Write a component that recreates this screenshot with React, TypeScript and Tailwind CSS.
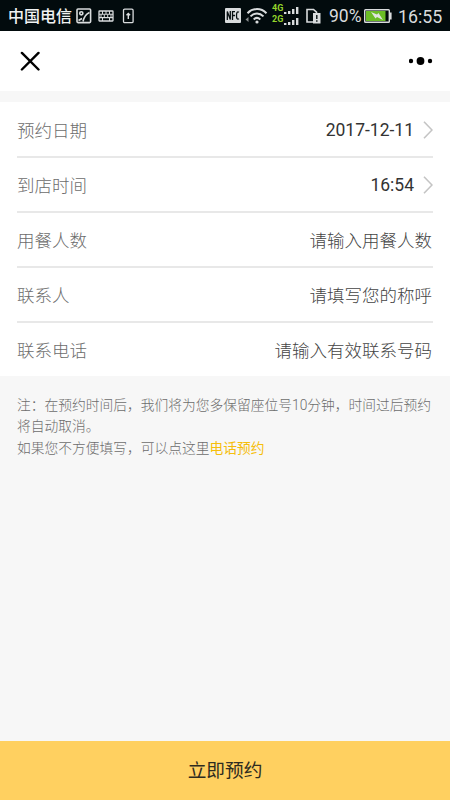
import React from "react";

const fields = [
  { label: "预约日期", value: "2017-12-11", picker: true },
  { label: "到店时间", value: "16:54", picker: true },
  { label: "用餐人数", placeholder: "请输入用餐人数" },
  { label: "联系人", placeholder: "请填写您的称呼" },
  { label: "联系电话", placeholder: "请输入有效联系号码" },
];

function StatusBar() {
  return (
    <div className="flex h-[31px] shrink-0 items-center bg-[#020b0d] pl-2 pr-2 text-[#d9dcdd]">
      <span className="w-[64px] whitespace-nowrap pt-[2px] text-[16px] leading-none font-medium text-[#f0f2f2]">
        中国电信
      </span>
      <svg className="ml-[4px] h-4 w-4" viewBox="0 0 16 16" fill="none" stroke="currentColor" strokeWidth="1.6">
        <rect x="1" y="1" width="13.6" height="13.6" rx="1" />
        <circle cx="5.3" cy="5.3" r="1.6" />
        <path d="M2.5 12.5 6 10.500M7 13.500C8 9 10 6 13.500 4.500" />
      </svg>
      <svg className="ml-[6px] h-3 w-4" viewBox="0 0 16 12" fill="none" stroke="currentColor">
        <rect x="1" y="1" width="14" height="10" rx="0.5" strokeWidth="1.3" />
        <path d="M1 4.200h14M1 7.600h14" strokeWidth="1.1" />
        <path d="M4.500 1v3M8 1v3M11.500 1v3M3 4.500v3M6.300 4.500v3M9.700 4.500v3M13 4.500v3M4.500 8v3M11.500 8v3" strokeWidth="1" />
      </svg>
      <svg className="ml-[8px] h-4 w-3" viewBox="0 0 12 16" fill="none" stroke="currentColor">
        <rect x="1.5" y="1.2" width="9.6" height="13.5" rx="1.2" strokeWidth="1.3" />
        <path d="M6.300 5v6M4.500 7.200l1.800-1.800 1.800 1.800" strokeWidth="1.4" />
      </svg>
      <div className="flex-1" />
      <svg className="h-[15px] w-[16px]" viewBox="0 0 16 15">
        <rect width="16" height="15" rx="1" fill="currentColor" />
        <path
          d="M2.300 12V3.500L5.300 11.500V3M7.500 12V3.600H10M7.500 7.500H10M14 4.200c-1.700-1-2.500.3-2.500 3.300s.8 4.300 2.500 3.300"
          fill="none"
          stroke="#071012"
          strokeWidth="1.3"
        />
      </svg>
      <svg className="ml-[4px] h-[16px] w-[23px]" viewBox="0 0 23 16" fill="none" stroke="currentColor" strokeWidth="2">
        <path d="M2.500 5.200C8-.3 16-.3 21.500 5.200M5.500 8.400c4-4 9-4 13 0M8.700 11.400c2.200-2 4.400-2 6.600 0" />
        <circle cx="12" cy="14" r="1.6" fill="currentColor" stroke="none" />
        <path d="M3.500 9v5L.5 11.500z" fill="#8b9091" stroke="none" />
      </svg>
      <div className="ml-[4px] -mt-1 flex w-[12px] flex-col font-[Roboto] text-[9px] leading-[11px] font-bold text-[#94d32b]">
        <span>4G</span>
        <span>2G</span>
      </div>
      <svg className="h-[21px] w-[15px]" viewBox="0 0 15 21" fill="currentColor">
        <path d="M0 7h2.400v2H0zM4 6h2.400v3H4zM8 4h2.400v5H8zM12 2h2.400v7H12z" />
        <path d="M0 18h2.400v2H0zM4 17h2.400v3H4zM8 15h2.400v5H8zM12 13h2.400v7H12z" />
      </svg>
      <svg className="ml-[7px] h-[16px] w-[15px]" viewBox="0 0 15 16">
        <path d="M1 1.500h6.500l3 2.700V14H1z" fill="none" stroke="currentColor" strokeWidth="1.6" />
        <path d="M7 5h7.500v10.500H7z" fill="currentColor" />
        <path d="M10.800 7v4M10.800 12.300v1.500" stroke="#071012" strokeWidth="1.4" />
      </svg>
      <span className="ml-[8px] w-[34px] whitespace-nowrap pt-[2px] font-[Roboto] text-[17.5px] leading-none">
        90%
      </span>
      <svg className="ml-[1px] h-[14px] w-[28px]" viewBox="0 0 28 14">
        <rect x=".7" y=".7" width="24.6" height="12.6" rx=".8" fill="none" stroke="currentColor" strokeWidth="1.4" />
        <path d="M26 3.500h1.600v7H26z" fill="currentColor" />
        <path d="M2 2h19.500v10H2z" fill="#6bbd25" />
        <path d="m7 3 6 2.500L14.500 4 19 11l-6-3-1.500 1.500z" fill="#e0e5dd" />
      </svg>
      <span className="ml-[6px] w-[44px] whitespace-nowrap pt-[2px] font-[Roboto] text-[17.8px] leading-none">
        16:55
      </span>
    </div>
  );
}

function App() {
  return (
    <div className="flex h-[800px] w-[450px] flex-col overflow-hidden bg-[#f7f7f7] font-['Roboto','Noto_Sans_CJK_SC',sans-serif]">
      <StatusBar />
      <header className="flex h-[60px] shrink-0 items-center justify-between bg-white pr-[17px] pl-5">
        <svg className="h-5 w-5" viewBox="0 0 20 20" stroke="#000" strokeWidth="2.4" strokeLinecap="round">
          <path d="M1.900 1.900l16.600 16.600M18.500 1.900 1.900 18.500" />
        </svg>
        <svg className="h-2 w-6" viewBox="0 0 24 8">
          <circle cx="2" cy="4" r="2.2" />
          <circle cx="11.5" cy="4" r="3.9" />
          <circle cx="21" cy="4" r="2.2" />
        </svg>
      </header>

      <div className="mt-[11px] flex flex-col bg-white px-[17px] pt-px">
        {fields.map((field) => (
          <div
            key={field.label}
            className="flex h-[55px] items-center justify-between border-b-2 border-[#e8e8e8] text-[17.5px] last:h-[53px] last:border-b-0"
          >
            <span className="pt-[3px] font-light text-[#6c6c6c]">{field.label}</span>
            {field.picker ? (
              <div className="flex items-center">
                <span className="pt-[2px] text-[#333]">{field.value}</span>
                <svg
                  className="ml-[9px] h-[18px] w-[10px]"
                  viewBox="0 0 10 18"
                  fill="none"
                  stroke="#c4c4c4"
                  strokeWidth="1.6"
                >
                  <path d="M1 .8 9 9l-8 8.200" />
                </svg>
              </div>
            ) : (
              <span className="pt-[3px] pr-px font-light text-[#444]">{field.placeholder}</span>
            )}
          </div>
        ))}
      </div>

      <div className="px-[17px] pt-[19px] text-[13.75px] leading-[21.3px] font-light text-[#6c6c6c]">
        <p className="whitespace-nowrap">
          注：在预约时间后，我们将为您多保留座位号10分钟，时间过后预约
          <br />
          将自动取消。
        </p>
        <p>
          如果您不方便填写，可以点这里<a className="font-normal text-[#f6be0c]">电话预约</a>
        </p>
      </div>

      <button className="mt-auto h-[59px] w-full shrink-0 bg-[#ffd060] pt-[2px] text-[18.7px] text-[#2e2b20]">
        立即预约
      </button>
    </div>
  );
}

export default App;
